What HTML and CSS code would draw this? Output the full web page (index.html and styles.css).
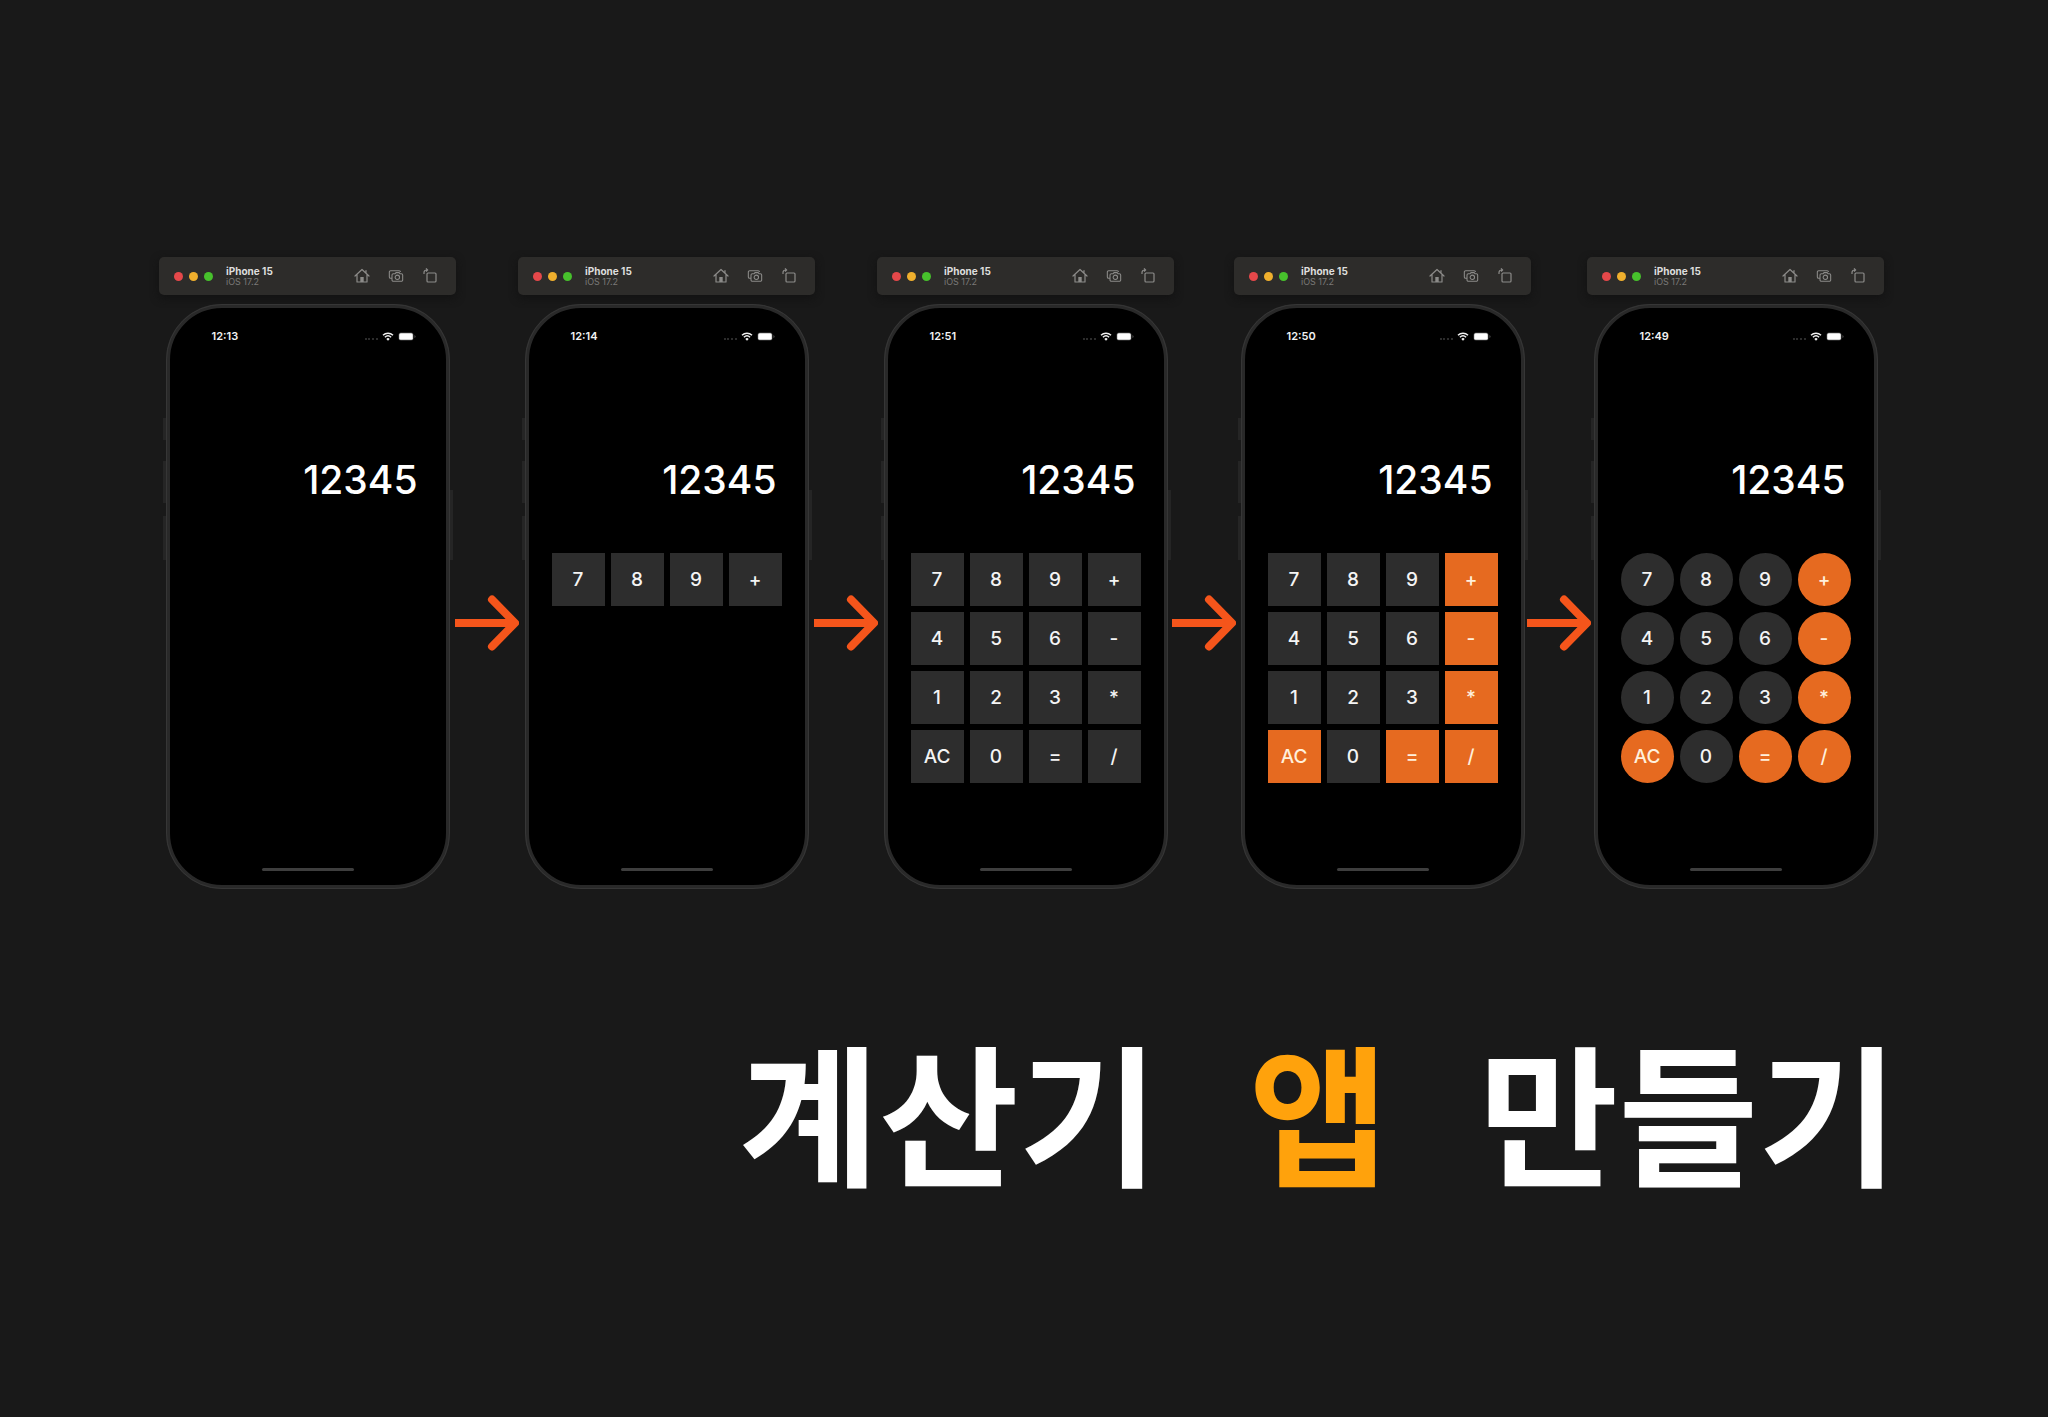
FILE: index.html
```html
<!DOCTYPE html>
<html lang="ko">
<head>
<meta charset="utf-8">
<meta name="viewport" content="width=device-width, initial-scale=1">
<title>계산기 앱 만들기</title>
<link rel="stylesheet" href="styles.css">
</head>
<body>
<svg class="sprite" aria-hidden="true">
  <symbol id="home" viewBox="0 0 16 16"><path d="M1 8 8 1.500 15 8M3 6.500V14h10V6.500M12 5V2.500" fill="none" stroke="currentColor" stroke-width="1.200" stroke-linecap="round" stroke-linejoin="round"/><path d="M6.300 9h3.400v5H6.300z" fill="currentColor"/></symbol>
  <symbol id="shot" viewBox="0 0 18 16"><path d="M4.500 10.500H3A1.500 1.500 0 0 1 1.500 9V3.500A1.500 1.500 0 0 1 3 2h9.500A1.500 1.500 0 0 1 14 3.500M6 5.500h2l1-1.300h3.500l1 1.300H15A1.500 1.500 0 0 1 16.500 7v5.500A1.500 1.500 0 0 1 15 14H6a1.500 1.500 0 0 1-1.500-1.500V7A1.500 1.500 0 0 1 6 5.500z" fill="none" stroke="currentColor" stroke-width="1.200"/><circle cx="10.500" cy="9.500" r="2.500" fill="none" stroke="currentColor" stroke-width="1.200"/></symbol>
  <symbol id="rotate" viewBox="0 0 16 16"><rect x="5" y="5" width="9" height="9" rx="1" fill="none" stroke="currentColor" stroke-width="1.200"/><path d="M2 6V4.500A2.500 2.500 0 0 1 4.500 2H5.500M4 .4 5.600 2 4 3.600" fill="none" stroke="currentColor" stroke-width="1.200"/></symbol>
  <symbol id="wifi" viewBox="0 0 12 9"><path d="M1 3.200a7.300 7.300 0 0 1 10 0M2.900 5.200a4.600 4.600 0 0 1 6.200 0" fill="none" stroke="currentColor" stroke-width="1.500"/><path d="M6 8.800 4.300 6.900a2.500 2.500 0 0 1 3.400 0z" fill="currentColor"/></symbol>
  <symbol id="battery" viewBox="0 0 18 9"><rect x=".5" y=".5" width="15" height="8" rx="2.500" fill="#444"/><rect x="1.200" y="1.200" width="13.600" height="6.600" rx="1.500" fill="#fff"/><path d="M16.500 3v3q1-.5 1-1.500t-1-1.500z" fill="#555"/></symbol>
  <symbol id="arrow" viewBox="0 0 64 56"><path d="M0 28h58" fill="none" stroke="currentColor" stroke-width="8"/><path d="M37 4.500 60 28 37 51.500" fill="none" stroke="currentColor" stroke-width="8" stroke-linecap="round" stroke-linejoin="round"/></symbol>
</svg>
<main class="poster">
  <div class="steps">
    <section class="simulator">
      <header class="toolbar">
        <span class="light red"></span><span class="light yellow"></span><span class="light green"></span>
        <div class="device"><strong>iPhone 15</strong><small>iOS 17.2</small></div>
        <button class="tool" aria-label="Home"><svg><use href="#home"/></svg></button>
        <button class="tool" aria-label="Screenshot"><svg><use href="#shot"/></svg></button>
        <button class="tool" aria-label="Rotate"><svg><use href="#rotate"/></svg></button>
      </header>
      <div class="phone">
        <i class="side action"></i><i class="side up"></i><i class="side down"></i><i class="side power"></i>
        <div class="status"><time>12:13</time><span class="cell"></span><svg class="wifi"><use href="#wifi"/></svg><svg class="battery"><use href="#battery"/></svg></div>
        <output class="display">12345</output>
        <div class="indicator"></div>
      </div>
    </section>
    <svg class="arrow"><use href="#arrow"/></svg>
    <section class="simulator">
      <header class="toolbar">
        <span class="light red"></span><span class="light yellow"></span><span class="light green"></span>
        <div class="device"><strong>iPhone 15</strong><small>iOS 17.2</small></div>
        <button class="tool" aria-label="Home"><svg><use href="#home"/></svg></button>
        <button class="tool" aria-label="Screenshot"><svg><use href="#shot"/></svg></button>
        <button class="tool" aria-label="Rotate"><svg><use href="#rotate"/></svg></button>
      </header>
      <div class="phone">
        <i class="side action"></i><i class="side up"></i><i class="side down"></i><i class="side power"></i>
        <div class="status"><time>12:14</time><span class="cell"></span><svg class="wifi"><use href="#wifi"/></svg><svg class="battery"><use href="#battery"/></svg></div>
        <output class="display">12345</output>
        <div class="keys">
          <button>7</button><button>8</button><button>9</button><button>+</button>
        </div>
        <div class="indicator"></div>
      </div>
    </section>
    <svg class="arrow"><use href="#arrow"/></svg>
    <section class="simulator">
      <header class="toolbar">
        <span class="light red"></span><span class="light yellow"></span><span class="light green"></span>
        <div class="device"><strong>iPhone 15</strong><small>iOS 17.2</small></div>
        <button class="tool" aria-label="Home"><svg><use href="#home"/></svg></button>
        <button class="tool" aria-label="Screenshot"><svg><use href="#shot"/></svg></button>
        <button class="tool" aria-label="Rotate"><svg><use href="#rotate"/></svg></button>
      </header>
      <div class="phone">
        <i class="side action"></i><i class="side up"></i><i class="side down"></i><i class="side power"></i>
        <div class="status"><time>12:51</time><span class="cell"></span><svg class="wifi"><use href="#wifi"/></svg><svg class="battery"><use href="#battery"/></svg></div>
        <output class="display">12345</output>
        <div class="keys">
          <button>7</button><button>8</button><button>9</button><button>+</button>
          <button>4</button><button>5</button><button>6</button><button>-</button>
          <button>1</button><button>2</button><button>3</button><button>*</button>
          <button>AC</button><button>0</button><button>=</button><button>/</button>
        </div>
        <div class="indicator"></div>
      </div>
    </section>
    <svg class="arrow"><use href="#arrow"/></svg>
    <section class="simulator">
      <header class="toolbar">
        <span class="light red"></span><span class="light yellow"></span><span class="light green"></span>
        <div class="device"><strong>iPhone 15</strong><small>iOS 17.2</small></div>
        <button class="tool" aria-label="Home"><svg><use href="#home"/></svg></button>
        <button class="tool" aria-label="Screenshot"><svg><use href="#shot"/></svg></button>
        <button class="tool" aria-label="Rotate"><svg><use href="#rotate"/></svg></button>
      </header>
      <div class="phone">
        <i class="side action"></i><i class="side up"></i><i class="side down"></i><i class="side power"></i>
        <div class="status"><time>12:50</time><span class="cell"></span><svg class="wifi"><use href="#wifi"/></svg><svg class="battery"><use href="#battery"/></svg></div>
        <output class="display">12345</output>
        <div class="keys">
          <button>7</button><button>8</button><button>9</button><button class="op">+</button>
          <button>4</button><button>5</button><button>6</button><button class="op">-</button>
          <button>1</button><button>2</button><button>3</button><button class="op">*</button>
          <button class="op">AC</button><button>0</button><button class="op">=</button><button class="op">/</button>
        </div>
        <div class="indicator"></div>
      </div>
    </section>
    <svg class="arrow"><use href="#arrow"/></svg>
    <section class="simulator">
      <header class="toolbar">
        <span class="light red"></span><span class="light yellow"></span><span class="light green"></span>
        <div class="device"><strong>iPhone 15</strong><small>iOS 17.2</small></div>
        <button class="tool" aria-label="Home"><svg><use href="#home"/></svg></button>
        <button class="tool" aria-label="Screenshot"><svg><use href="#shot"/></svg></button>
        <button class="tool" aria-label="Rotate"><svg><use href="#rotate"/></svg></button>
      </header>
      <div class="phone">
        <i class="side action"></i><i class="side up"></i><i class="side down"></i><i class="side power"></i>
        <div class="status"><time>12:49</time><span class="cell"></span><svg class="wifi"><use href="#wifi"/></svg><svg class="battery"><use href="#battery"/></svg></div>
        <output class="display">12345</output>
        <div class="keys round">
          <button>7</button><button>8</button><button>9</button><button class="op">+</button>
          <button>4</button><button>5</button><button>6</button><button class="op">-</button>
          <button>1</button><button>2</button><button>3</button><button class="op">*</button>
          <button class="op">AC</button><button>0</button><button class="op">=</button><button class="op">/</button>
        </div>
        <div class="indicator"></div>
      </div>
    </section>
  </div>
  <h1 class="title"><span>계산기</span> <span class="accent">앱</span> <span>만들기</span></h1>
</main>
</body>
</html>
```
FILE: styles.css
```css
* { box-sizing: border-box; }
body {
  margin: 0;
  background: #191919;
  color: #fff;
  font-family: Inter, "Noto Sans CJK KR", sans-serif;
}
button { margin: 0; padding: 0; border: 0; font: inherit; color: inherit; }
.sprite { display: none; }

.poster { padding: 257px 150px 0 159px; min-height: 100vh; }
.steps {
  display: grid;
  grid-template-columns:
    297px minmax(0, 62fr) 297px minmax(0, 62fr) 297px
    minmax(0, 60fr) 297px minmax(0, 56fr) 297px;
  padding-right: 14px;
}
.simulator { display: flex; flex-direction: column; align-items: center; gap: 9px; }

/* simulator window bar */
.toolbar {
  display: flex;
  align-items: center;
  width: 100%;
  height: 38px;
  padding: 0 18px 0 15px;
  border-radius: 5px;
  background: #2d2c2a;
  box-shadow: 0 3px 8px #121212;
}
.light { width: 9px; height: 9px; margin-right: 6px; border-radius: 50%; }
.red { background: #e5484a; }
.yellow { background: #efaf2d; }
.green { background: #47c12c; }
.device { display: flex; flex-direction: column; flex: 1; margin-left: 7px; }
.device strong { font-size: 10px; line-height: 11px; font-weight: 700; color: #dededd; }
.device small { font-size: 9px; line-height: 10px; color: #7a7977; }
.tool { display: flex; margin-left: 18px; background: none; color: #8c8b89; }
.tool svg { width: 16px; height: 16px; }

/* handset */
.phone {
  position: relative;
  display: flex;
  flex-direction: column;
  width: 284px;
  height: 585px;
  padding: 21px 23px 14px;
  border: 4px solid #292929;
  border-radius: 56px;
  outline: 1px solid #363636;
  outline-offset: -1px;
  background: #000;
}
.side { position: absolute; width: 3px; background: #252525; }
.action { left: -7px; top: 110px; height: 22px; }
.up { left: -7px; top: 153px; height: 42px; }
.down { left: -7px; top: 208px; height: 44px; }
.power { right: -7px; top: 182px; height: 70px; }

.status { display: flex; align-items: center; height: 14px; padding: 0 7px 0 19px; color: #f2f2f2; }
.status time { flex: 1; font-size: 11px; line-height: 14px; font-weight: 600; }
.cell { width: 13px; margin-right: 4px; padding-top: 5px; border-bottom: 2px dotted #2c2c2c; }
.wifi { width: 12px; height: 9px; margin-right: 4px; }
.battery { width: 18px; height: 9px; }

.display {
  margin-top: 113px;
  padding-right: 5px;
  font-size: 39px;
  line-height: 48px;
  font-weight: 500;
  text-align: right;
}

.keys {
  display: grid;
  grid-template-columns: repeat(4, 1fr);
  gap: 6px;
  margin-top: 49px;
}
.keys button { height: 53px; background: #2d2d2d; color: #f4f4f4; font-size: 19px; font-weight: 500; }
.keys .op { background: #e66a20; color: #fff0dc; }
.round button { border-radius: 50%; }

.indicator { width: 92px; height: 3px; margin: auto auto 0; border-radius: 2px; background: #3e3e3e; }

.arrow { width: 64px; height: 56px; margin-top: 338px; justify-self: center; color: #f5551b; }

.title {
  display: flex;
  justify-content: flex-end;
  gap: 90px;
  margin: 132px 0 0;
  font-family: "Noto Sans CJK KR", sans-serif;
  font-size: 152px;
  line-height: 176px;
  font-weight: 700;
}
.accent { color: #ffa20c; }
```
